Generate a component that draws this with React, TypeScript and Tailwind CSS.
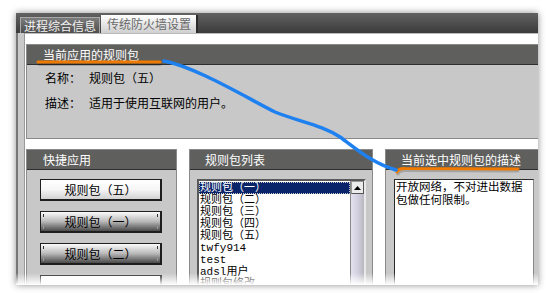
const cn = "font-['Noto_Sans_CJK_SC','Noto_Sans_CJK_SC',sans-serif]";

const listItems = ["规则包（一）", "规则包（二）", "规则包（三）", "规则包（四）", "规则包（五）", "twfy914", "test", "adsl用户", "规则包修改"];

function PanelHeader({ title, pl }: { title: string; pl: string }) {
  return (
    <div className={`h-[20px] bg-[#5f605e] border-b border-[#2e2e2e] text-white text-[12px] leading-[19px] ${pl}`}>
      {title}
    </div>
  );
}

function RuleButton({ label, light }: { label: string; light?: boolean }) {
  return (
    <div
      className={`relative w-[122px] h-[22px] shrink-0 border border-[#1e1e1e] border-r-2 border-b-2 text-[12px] leading-[19px] text-black text-center ${
        light
          ? "bg-gradient-to-b from-white via-[#f6f6f6] to-[#d2d2d2]"
          : "bg-gradient-to-b from-[#fbfbfb] via-[#b9b9b9] to-[#4c4c4c]"
      }`}
    >
      {!light && (
        <>
          <span className="absolute left-[2px] top-[2px] w-[1px] h-[3px] bg-[#333]" />
          <span className="absolute right-[2px] top-[2px] w-[1px] h-[3px] bg-[#333]" />
          <span className="absolute left-[2px] bottom-[2px] w-[1px] h-[3px] bg-[#999]" />
          <span className="absolute right-[2px] bottom-[2px] w-[1px] h-[3px] bg-[#999]" />
        </>
      )}
      {label}
    </div>
  );
}

export default function App() {
  return (
    <div className={`relative w-[549px] h-[293px] bg-white overflow-hidden pt-[13px] pl-[16px] ${cn}`}>
      <div className="relative w-[522px] h-[272px] overflow-hidden flex flex-col shadow-[0_0_7px_rgba(0,0,0,0.45)]">
        {/* Tab strip */}
        <div className="h-[20px] shrink-0 flex items-end pl-[4px] gap-[1px] bg-gradient-to-b from-[#626262] to-[#3b3b3b]">
          <div className="w-[80px] h-[16px] bg-gradient-to-b from-[#7c7c7c] to-[#4d4d4d] border border-b-0 border-[#a8a8a8] text-[#f2f2f2] text-[12px] leading-[15px] pl-[3px]">
            进程综合信息
          </div>
          <div className="w-[97px] h-[18px] bg-gradient-to-b from-white to-[#cfcfcf] border-r-2 border-[#2a2a2a] text-[#6a6a6a] text-[12px] leading-[17px] pl-[6px]">
            传统防火墙设置
          </div>
        </div>

        {/* Body */}
        <div className="flex-1 flex bg-white">
          <div className="w-[9px] shrink-0 bg-[#c9c9c9] border-l-2 border-[#777] border-r border-r-[#999]" />
          <div className="flex-1 flex flex-col pt-[10px] pl-[1px] border-t border-[#bbb]">
            {/* Current rule package */}
            <div className="h-[95px] shrink-0 border border-[#8a8a8a] border-r-0 flex flex-col">
              <PanelHeader title="当前应用的规则包" pl="pl-[16px]" />
              <div className="flex-1 bg-[#c8c8c8] pt-[6px] pl-[18px] flex flex-col gap-[11px] text-[12px] leading-[14px] text-black">
                <div className="flex">
                  <span className="w-[44px]">名称：</span>
                  <span>规则包（五）</span>
                </div>
                <div className="flex">
                  <span className="w-[44px]">描述：</span>
                  <span>适用于使用互联网的用户。</span>
                </div>
              </div>
            </div>

            {/* Three panels */}
            <div className="flex-1 flex gap-[12px] mt-[10px]">
              {/* Quick apply */}
              <div className="w-[151px] shrink-0 border border-[#8a8a8a] flex flex-col">
                <PanelHeader title="快捷应用" pl="pl-[16px]" />
                <div className="flex-1 bg-[#c8c8c8] pl-[13px] pt-[9px] flex flex-col gap-[10px]">
                  <RuleButton label="规则包（五）" light />
                  <RuleButton label="规则包（一）" />
                  <RuleButton label="规则包（二）" />
                  <RuleButton label="" light />
                </div>
              </div>

              {/* Rule list */}
              <div className="w-[184px] shrink-0 border border-[#8a8a8a] flex flex-col">
                <PanelHeader title="规则包列表" pl="pl-[15px]" />
                <div className="flex-1 bg-[#c8c8c8] pl-[7px] pt-[9px]">
                  <div className="w-[169px] h-full flex border-2 border-[#5a5a5a] border-r-[#e8e8e8] border-b-0 bg-white">
                    <div className="flex-1 font-['Liberation_Mono','Noto_Sans_CJK_SC',monospace] text-[11px] leading-[12px] text-black pt-[1px]">
                      {listItems.map((it, i) => (
                        <div
                          key={i}
                          className={
                            i === 0
                              ? "h-[12px] bg-[#0a246a] text-white outline-1 outline-dotted outline-[#c8c8c8] -outline-offset-1 pl-[1px]"
                              : "h-[12px] pl-[1px]"
                          }
                        >
                          {it}
                        </div>
                      ))}
                    </div>
                    <div className="w-[14px] shrink-0 flex flex-col bg-gradient-to-r from-[#e4e2ee] via-[#d2cfe0] to-[#b8b8c0] border-l border-[#888]">
                      <div className="h-[13px] bg-[#ececec] border border-[#999] border-r-[#555] border-b-[#555] flex items-center justify-center">
                        <svg width="7" height="4" viewBox="0 0 7 4">
                          <path d="M3.5 0 L7 4 L0 4 Z" fill="#000" />
                        </svg>
                      </div>
                    </div>
                  </div>
                </div>
              </div>

              {/* Selected description */}
              <div className="flex-1 border border-[#8a8a8a] border-r-0 flex flex-col">
                <PanelHeader title="当前选中规则包的描述" pl="pl-[15px]" />
                <div className="flex-1 bg-[#c8c8c8] pl-[8px] pr-[4px] pt-[9px]">
                  <div className="h-full bg-white border border-[#2a2a2a] border-r-[#888] border-b-0 font-['Liberation_Sans','Noto_Sans_CJK_SC',sans-serif] text-[11.5px] leading-[13px] text-black pl-[1px] pt-[1px]">
                    <div>开放网络，不对进出数据</div>
                    <div>包做任何限制。</div>
                  </div>
                </div>
              </div>
            </div>
          </div>
        </div>

        {/* bottom fade of the screenshot */}
        <div className="absolute left-0 right-0 bottom-0 h-[12px] bg-gradient-to-b from-transparent to-white" />
      </div>

      {/* hand-drawn annotations */}
      <svg className="absolute inset-0 pointer-events-none" width="549" height="293" viewBox="0 0 549 293">
        <path d="M39 64.5 L160 64.5" stroke="rgba(0,0,0,0.18)" strokeWidth="3" strokeLinecap="round" />
        <path d="M38 62 L160 62" stroke="#f07a00" strokeWidth="3" strokeLinecap="round" />
        <path d="M398 174 Q400 170 406 170.5 L518 171" stroke="rgba(0,0,0,0.18)" strokeWidth="3" fill="none" strokeLinecap="round" />
        <path d="M397 172 Q399 168 405 168.5 L518 169" stroke="#f07a00" strokeWidth="3" fill="none" strokeLinecap="round" />
        <path
          d="M164 61 C195 67 240 94 275 112 C300 122 322 125 340 137 C358 150 372 163 396 170"
          stroke="#1f80f0"
          strokeWidth="3.5"
          fill="none"
          strokeLinecap="round"
        />
      </svg>
    </div>
  );
}
